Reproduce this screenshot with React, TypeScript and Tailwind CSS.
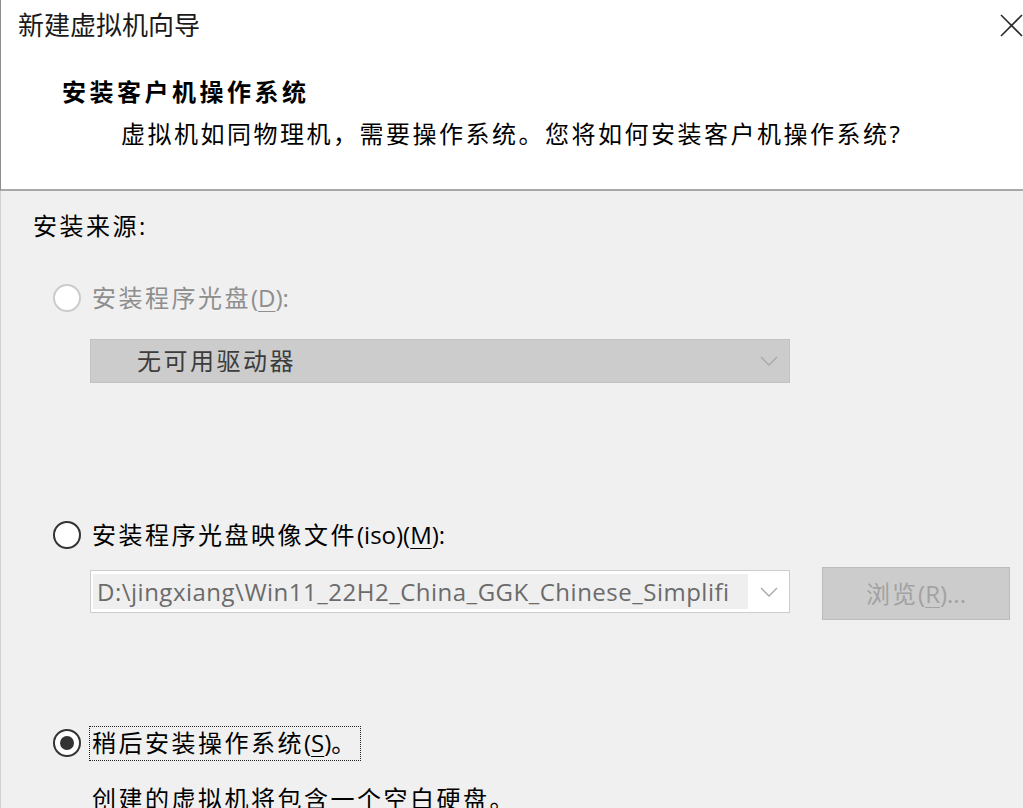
import clsx from "clsx";

// 单选按钮（模拟 Windows 经典样式）
function Radio({ checked, disabled }: { checked?: boolean; disabled?: boolean }) {
  return (
    <span
      className={clsx(
        "flex h-[28px] w-[28px] shrink-0 items-center justify-center rounded-full border-2 bg-white",
        disabled ? "border-[#cbcbcb]" : "border-[#333333]"
      )}
    >
      {checked && <span className="h-[14px] w-[14px] rounded-full bg-[#333333]" />}
    </span>
  );
}

function Chevron() {
  return (
    <svg width="18" height="10" viewBox="0 0 18 10" className="shrink-0">
      <polyline points="1,1 9,9 17,1" fill="none" stroke="#a8a8a8" strokeWidth="1.3" />
    </svg>
  );
}

// 助记键下划线
function Key({ children }: { children: string }) {
  return <span className="underline decoration-1 underline-offset-[4px]">{children}</span>;
}

export default function App() {
  return (
    <div className="flex h-[808px] w-[1023px] flex-col overflow-hidden bg-[#f0f0f0] font-['Open_Sans','Noto_Sans_CJK_SC',sans-serif] text-black">
      {/* 标题区域 */}
      <header className="flex h-[191px] shrink-0 flex-col border-b-2 border-l border-b-[#a9a9a9] border-l-[#8c8c8c] bg-white">
        <div className="flex h-[50px] items-center justify-between pl-[17px]">
          <span className="text-[26px] leading-none text-[#1a1a1a]">新建虚拟机向导</span>
          <svg width="23" height="23" viewBox="0 0 23 23">
            <line x1="1" y1="1" x2="22" y2="22" stroke="#2b2b2b" strokeWidth="1.6" />
            <line x1="22" y1="1" x2="1" y2="22" stroke="#2b2b2b" strokeWidth="1.6" />
          </svg>
        </div>
        <div className="mt-[29px] flex h-[26px] items-center pl-[61px]">
          <span className="text-[24px] font-bold leading-none tracking-[3.5px]">安装客户机操作系统</span>
        </div>
        <div className="mt-[16px] flex h-[26px] items-center pl-[120px]">
          <span className="text-[24px] leading-none tracking-[2.5px]">
            虚拟机如同物理机，需要操作系统。您将如何安装客户机操作系统<span className="tracking-normal">?</span>
          </span>
        </div>
      </header>

      {/* 内容区域 */}
      <main className="flex flex-1 flex-col border-l border-[#d0d0d0] pl-[32px] text-[24px] leading-none tracking-[2.5px]">
        <div className="mt-[22px] flex h-[26px] items-center">安装来源:</div>

        <div className="ml-[20px] mt-[45px] flex h-[28px] items-center gap-[11px] text-[#8e8e8e]">
          <Radio disabled />
          <span>
            安装程序光盘<span className="tracking-normal">(<Key>D</Key>):</span>
          </span>
        </div>

        <div className="ml-[57px] mt-[27px] flex h-[44px] w-[700px] items-center justify-between border border-[#c2c2c2] bg-[#cccccc] pl-[46px] pr-[11px] text-[#3c3c3c]">
          <span>无可用驱动器</span>
          <Chevron />
        </div>

        <div className="ml-[20px] mt-[138px] flex h-[28px] items-center gap-[11px]">
          <Radio />
          <span>
            安装程序光盘映像文件<span className="tracking-normal">(iso)(<Key>M</Key>):</span>
          </span>
        </div>

        <div className="ml-[57px] mt-[18px] flex items-start">
          <div className="mt-[3px] flex h-[43px] w-[700px] items-center justify-between border border-[#cdcdcd] bg-white py-[3px] pl-[2px] pr-[11px]">
            <div className="flex h-full w-[655px] items-center overflow-hidden whitespace-nowrap bg-[#efefef] pl-[4px] text-[24px] tracking-[0.5px] text-[#6b6b6b]">
              D:\jingxiang\Win11_22H2_China_GGK_Chinese_Simplifi
            </div>
            <Chevron />
          </div>
          <button
            disabled
            className="ml-[32px] flex h-[53px] w-[188px] items-center justify-center border border-[#bcbcbc] bg-[#cccccc] text-[24px] tracking-[2px] text-[#a2a2a2]"
          >
            浏览<span className="tracking-normal">(<Key>R</Key>)...</span>
          </button>
        </div>

        <div className="ml-[20px] mt-[109px] flex h-[28px] items-center gap-[8px]">
          <Radio checked />
          <span className="flex h-[35px] items-center border border-dotted border-[#222222] px-[2px]">
            稍后安装操作系统<span className="tracking-normal">(<Key>S</Key>)</span>。
          </span>
        </div>

        <div className="ml-[59px] mt-[29px] flex h-[26px] shrink-0 items-center">创建的虚拟机将包含一个空白硬盘。</div>
      </main>
    </div>
  );
}
